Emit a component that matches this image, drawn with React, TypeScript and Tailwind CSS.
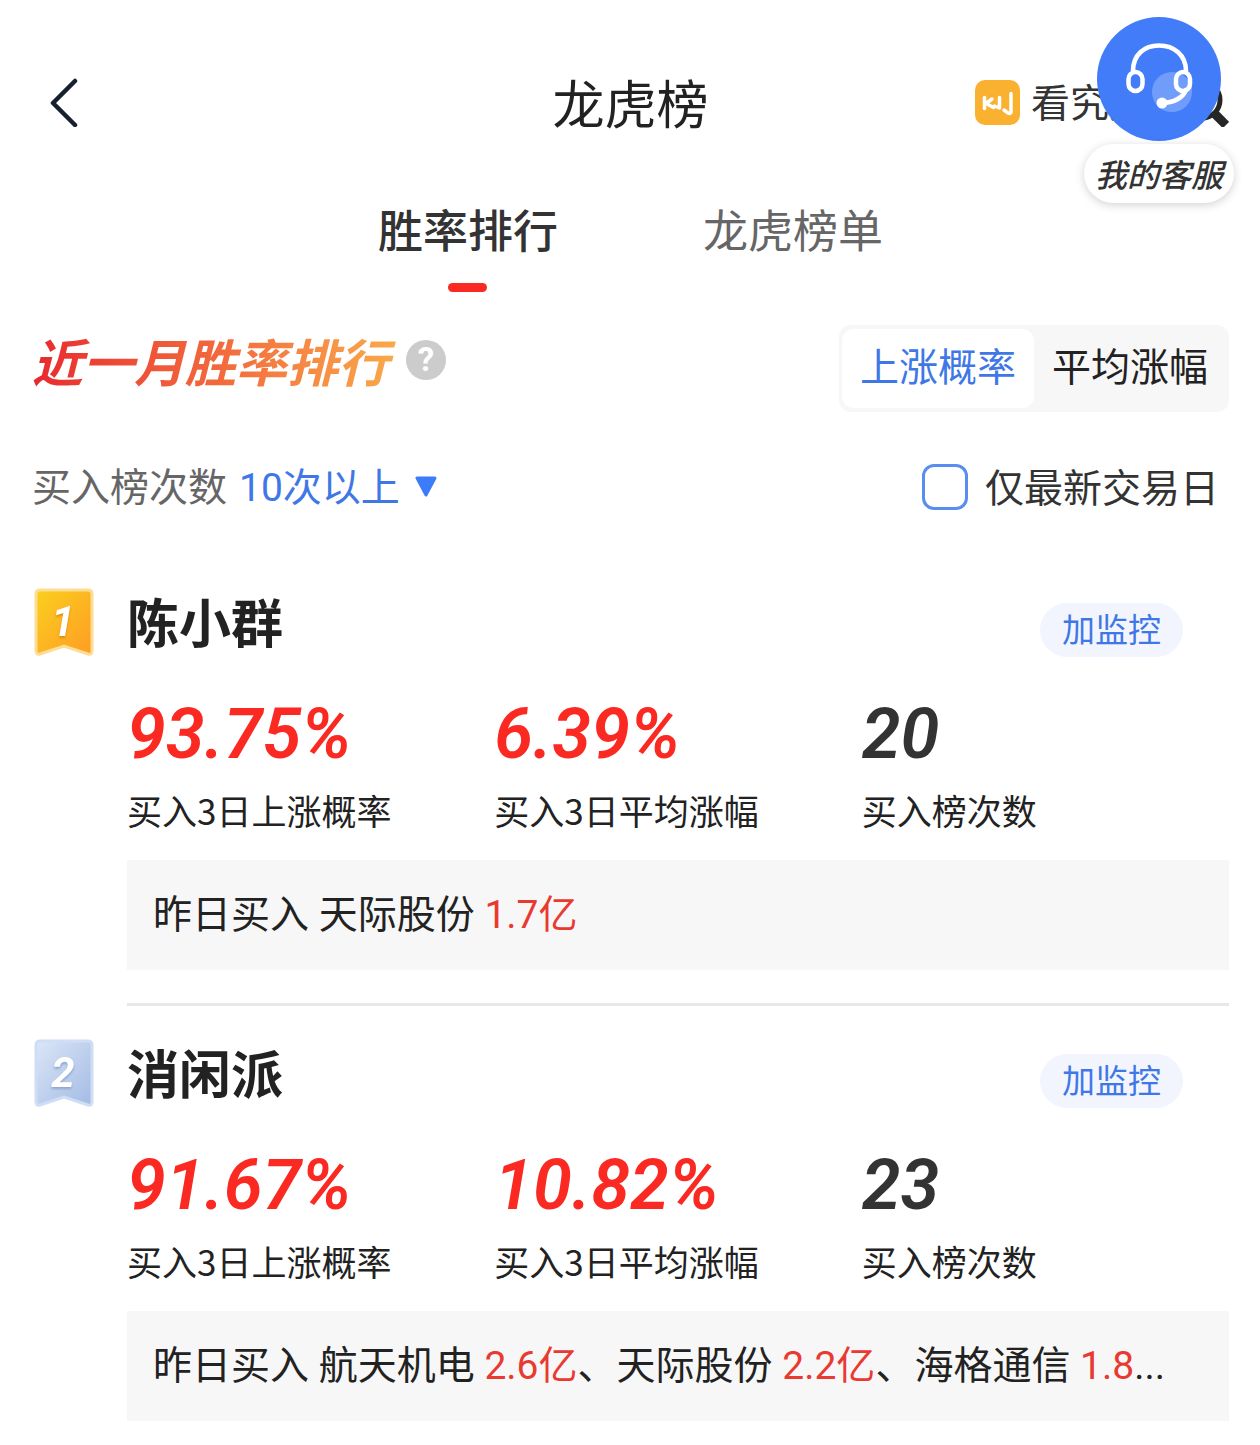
import { useState } from "react";

type Stock = { name: string; amount: string };

type Trader = {
  rank: number;
  name: string;
  winRate: string;
  avgGain: string;
  count: number;
  stocks: Stock[];
  more?: boolean;
};

const traders: Trader[] = [
  {
    rank: 1,
    name: "陈小群",
    winRate: "93.75%",
    avgGain: "6.39%",
    count: 20,
    stocks: [{ name: "天际股份", amount: "1.7亿" }],
  },
  {
    rank: 2,
    name: "消闲派",
    winRate: "91.67%",
    avgGain: "10.82%",
    count: 23,
    stocks: [
      { name: "航天机电", amount: "2.6亿" },
      { name: "天际股份", amount: "2.2亿" },
      { name: "海格通信", amount: "1.8" },
    ],
    more: true,
  },
];

function Header() {
  return (
    <header className="grid grid-cols-[1fr_auto_1fr] items-center pt-[62px]">
      <button aria-label="返回" className="justify-self-start pl-4">
        <svg className="h-[50px] w-[30px]" viewBox="0 0 30 50" fill="none">
          <path d="M27 4 5 26l22 22" stroke="#16202e" strokeWidth="4.500" strokeLinecap="round" strokeLinejoin="round" />
        </svg>
      </button>
      <h1 className="text-[52px] leading-[80px] text-[#222]">龙虎榜</h1>
      <div className="flex items-center justify-end">
        <a href="#kan" className="flex items-center gap-[11px] text-[39px] leading-[52px] text-[#333]">
          <svg className="size-[45px]" viewBox="0 0 45 45" fill="none">
            <rect width="45" height="45" rx="10" fill="#f9b12f" />
            <g stroke="#fff" strokeWidth="3.500" strokeLinejoin="round" strokeLinecap="round">
              <path d="M9.500 17.500v11" />
              <path d="M17 19l-6 4.500 7.500 4" />
              <path d="M24.500 17.500v10.500l-5-2" />
              <path d="M36 13.500v19q-1 1.500-3 .5l-4-3" />
            </g>
          </svg>
          <span className="pb-1">看究竟</span>
        </a>
        <button aria-label="搜索" className="pl-8">
          <svg className="size-[49px]" viewBox="0 0 49 49" fill="none" stroke="#262626">
            <circle cx="22" cy="22" r="18" strokeWidth="5" />
            <path d="M33 34l13 13" strokeWidth="9" />
          </svg>
        </button>
      </div>
    </header>
  );
}

function Tabs() {
  const [active, setActive] = useState(0);
  return (
    <nav className="mt-[55px] flex justify-center gap-[145px]">
      {["胜率排行", "龙虎榜单"].map((label, i) => (
        <button
          key={label}
          onClick={() => setActive(i)}
          className={`flex flex-col items-center gap-[22px] text-[45px] leading-[64px] ${
            active === i ? "font-medium text-[#333]" : "text-[#666]"
          }`}
        >
          {label}
          <span className={`h-[9px] w-[39px] rounded-full ${active === i ? "bg-[#fa2a23]" : ""}`} />
        </button>
      ))}
    </nav>
  );
}

function ModeSwitch() {
  const [mode, setMode] = useState(0);
  return (
    <div className="flex rounded-xl bg-[#f7f7f7] px-[3px] py-1">
      {["上涨概率", "平均涨幅"].map((label, i) => (
        <button
          key={label}
          onClick={() => setMode(i)}
          className={`rounded-xl px-[18px] pb-2 text-[39px] leading-[71px] ${
            mode === i ? "bg-white text-[#3f78e6]" : "text-[#222]"
          }`}
        >
          {label}
        </button>
      ))}
    </div>
  );
}

function Filters() {
  return (
    <div className="mt-[46px] flex items-center justify-between pr-[10px] text-[39px] leading-[52px]">
      <div className="flex items-baseline gap-3 pb-0.5">
        <label htmlFor="times" className="text-[#666]">买入榜次数</label>
        <div className="relative">
          <select
            id="times"
            className="appearance-none bg-transparent pr-[38px] font-[Roboto,'Noto_Sans_CJK_SC',sans-serif] text-[#3f78e6]"
          >
            <option>10次以上</option>
          </select>
          <svg
            className="pointer-events-none absolute top-1/2 right-0 h-[22px] w-6 -translate-y-1/2"
            viewBox="0 0 24 22"
          >
            <path d="M3 3h18L12 20z" fill="#3d7cf9" stroke="#3d7cf9" strokeWidth="3" strokeLinejoin="round" />
          </svg>
        </div>
      </div>
      <label className="flex items-center gap-[17px] text-[#333]">
        <input
          type="checkbox"
          className="size-[46px] appearance-none rounded-xl border-3 border-[#5a8df0] checked:bg-[#3d7cf9]"
        />
        <span className="pb-1">仅最新交易日</span>
      </label>
    </div>
  );
}

function RankBadge({ rank }: { rank: number }) {
  const gold = rank === 1;
  const id = `badge-${rank}`;
  return (
    <svg className="ml-0.5 h-[70px] w-[60px]" viewBox="0 0 60 70">
      <defs>
        <linearGradient id={id} x1="0" y1="0" x2="1" y2="1">
          <stop offset="0" stopColor={gold ? "#fad01f" : "#dbe6f7"} />
          <stop offset="1" stopColor={gold ? "#ff9c24" : "#a3bbe4"} />
        </linearGradient>
      </defs>
      <path
        d="M6 2h48q4 0 4 4v57q0 4-4 3L30 58 6 66q-4 1-4-3V6q0-4 4-4z"
        fill={`url(#${id})`}
        stroke={gold ? "#fddc94" : "#d0def5"}
        strokeWidth="3"
      />
      <text
        x="29"
        y="48"
        textAnchor="middle"
        className={`fill-white font-[Roboto] text-[42px] font-bold italic ${
          gold ? "drop-shadow-[0_2px_1px_#e08a10]" : "drop-shadow-[0_2px_1px_#8ea6cf]"
        }`}
      >
        {rank}
      </text>
    </svg>
  );
}

function Stat({ value, label, red }: { value: string | number; label: string; red?: boolean }) {
  return (
    <div className="flex flex-col-reverse gap-3">
      <dt className="text-[35px] leading-[48px] text-[#222]">{label}</dt>
      <dd
        className={`font-[Roboto] text-[70px] leading-[80px] font-semibold italic ${
          red ? "text-[#fa2a23]" : "text-[#333]"
        }`}
      >
        {value}
      </dd>
    </div>
  );
}

function TraderCard({ trader }: { trader: Trader }) {
  return (
    <li className="group grid grid-cols-[95px_minmax(0,1fr)]">
      <RankBadge rank={trader.rank} />
      <div className="border-b-3 border-[#e8e8e8] pb-[33px] group-last:border-0 group-last:pb-0">
        <div className="flex items-end justify-between pr-[46px]">
          <h3 className="pb-1 text-[52px] leading-[65px] font-bold text-[#222]">{trader.name}</h3>
          <button className="rounded-full bg-[#f2f5fe] px-[22px] pb-1 text-[33px] leading-[50px] text-[#3f78e6]">
            加监控
          </button>
        </div>
        <dl className="mt-[37px] grid grid-cols-3">
          <Stat value={trader.winRate} label="买入3日上涨概率" red />
          <Stat value={trader.avgGain} label="买入3日平均涨幅" red />
          <Stat value={trader.count} label="买入榜次数" />
        </dl>
        <div className="mt-[26px] bg-[#f7f7f7] px-[26px] py-[27px]">
          <p className="font-[Roboto,'Noto_Sans_CJK_SC',sans-serif] text-[39px] leading-[56px] text-[#222]">
            昨日买入{" "}
            {trader.stocks.map((s, i) => (
              <span key={s.name}>
                {i > 0 && "、"}
                {s.name} <span className="text-[#e93a32]">{s.amount}</span>
              </span>
            ))}
            {trader.more && "..."}
          </p>
        </div>
      </div>
    </li>
  );
}

function ServiceButton() {
  return (
    <button className="absolute top-[17px] right-[26px] flex flex-col items-center gap-[3px]">
      <svg className="size-[124px]" viewBox="0 0 124 124" fill="none">
        <circle cx="62" cy="62" r="62" fill="#427cf9" />
        <circle cx="75" cy="75" r="20" fill="#fff" fillOpacity="0.25" />
        <g stroke="#fff" strokeWidth="4.500" strokeLinecap="round">
          <path d="M36 54C36 38 47 28.500 62 28.500S89 38 89 54" />
          <rect x="31.500" y="55" width="14" height="19" rx="7" />
          <rect x="79" y="55" width="14" height="19" rx="7" />
          <path d="M89 73c-3 7-10 12-23 13" />
        </g>
        <circle cx="65" cy="86" r="5.500" fill="#fff" />
      </svg>
      <span className="rounded-full bg-white px-[11px] text-[32px] leading-[59px] font-medium text-[#333] italic shadow-[0_2px_10px_rgba(0,0,0,0.18)]">
        我的客服
      </span>
    </button>
  );
}

export default function App() {
  return (
    <div className="relative bg-white pr-[31px] pb-6 pl-8 font-['Noto_Sans_CJK_SC',sans-serif]">
      <Header />
      <Tabs />
      <main>
        <div className="mt-[33px] flex items-start justify-between">
          <div className="flex items-center">
            <h2 className="bg-gradient-to-r from-[#e8262f] via-[#f2693d] to-[#f9ac4b] bg-clip-text pr-[17px] text-[51px] leading-[70px] font-bold text-transparent italic">
              近一月胜率排行
            </h2>
            <button
              aria-label="说明"
              className="size-10 rounded-full bg-[#ccc] font-[Roboto] text-[33px] leading-10 font-bold text-white"
            >
              ?
            </button>
          </div>
          <ModeSwitch />
        </div>
        <Filters />
        <ul className="mt-[72px] flex flex-col gap-[33px]">
          {traders.map((t) => (
            <TraderCard key={t.rank} trader={t} />
          ))}
        </ul>
      </main>
      <ServiceButton />
    </div>
  );
}
